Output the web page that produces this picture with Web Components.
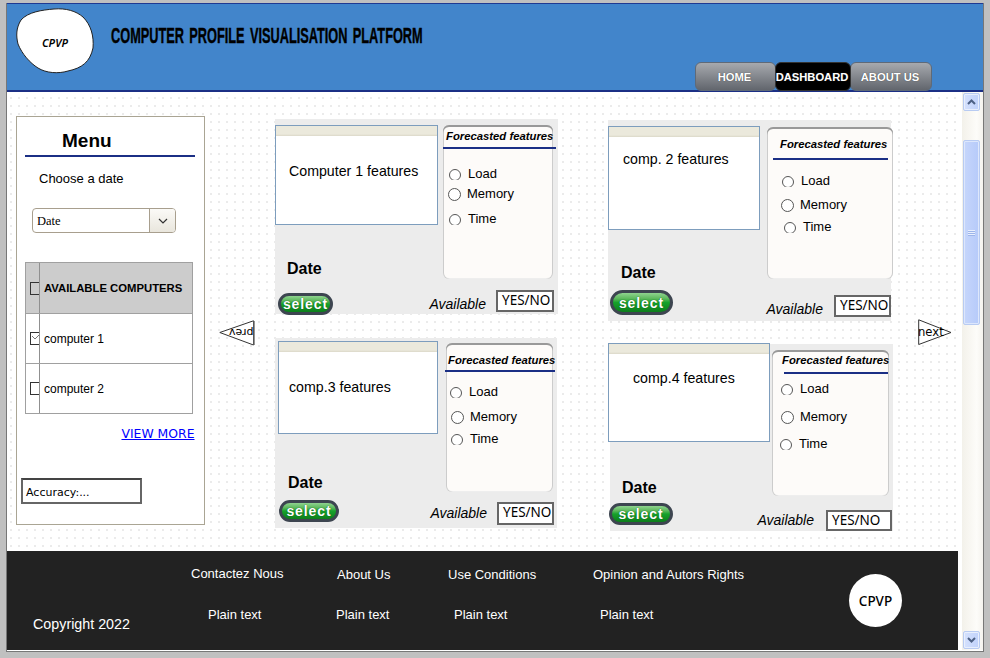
<!DOCTYPE html>
<html lang="en"><head><meta charset="utf-8"><title>CPVP</title>
<style>
html,body{margin:0;padding:0;background:#c0c0c0}
body{padding:3px 6px 0;font-family:"Liberation Sans",Arial,sans-serif;color:#000;height:655px;box-sizing:border-box;overflow:hidden}
</style></head><body>
<cp-frame>
  <cp-header slot="header">
    <cp-tab>HOME</cp-tab><cp-tab active style="--w:76px">DASHBOARD</cp-tab><cp-tab style="--w:82px">ABOUT US</cp-tab>
  </cp-header>
  <cp-sidebar slot="side">
    <cp-row header>AVAILABLE COMPUTERS</cp-row>
    <cp-row checked>computer 1</cp-row>
    <cp-row>computer 2</cp-row>
  </cp-sidebar>
  <cp-arrow slot="prev" dir="prev">prev</cp-arrow>

  <cp-card slot="c1" style="--cw:283px;--h:195px;--bx:0px;--by:6px;--bw:163px;--bh:100px;--tx:13px;--ty:27px;--fs:14.2px;--dx:12px;--dy:35px;--px:5px;--py:6px;--pw:110px;--ph:154px;--hx:3px;--hy:5px;--ux:0px;--uw:113px;--um:5px;--th:170px;--sx:3px;--sy:4px;--sw:55px;--sh:22px;--ay:7px;--ag:10px;--yy:1px;--yw:58px;--yh:22px;--pr:4px">
    <span slot="title">Computer 1 features</span>
    <cp-radio clip style="--x:6px;--t:17px;--g:7px">Load</cp-radio>
    <cp-radio style="--x:5px;--t:4px;--g:6px">Memory</cp-radio>
    <cp-radio clip style="--x:6px;--t:9px;--g:7px">Time</cp-radio>
  </cp-card>
  <cp-card slot="c3" style="--cw:282px;--h:190px;--bx:3px;--by:3px;--bw:160px;--bh:93px;--tx:10px;--ty:27px;--fs:14.2px;--dx:13px;--dy:40px;--px:8px;--py:5px;--pw:107px;--ph:149px;--hx:2px;--hy:11px;--ux:-1px;--uw:110px;--um:4px;--th:160px;--sx:4px;--sy:2px;--sw:60px;--sh:22px;--ay:7px;--ag:10px;--yy:4px;--yw:57px;--yh:23px;--pr:3px">
    <span slot="title">comp.3 features</span>
    <cp-radio clip style="--x:4px;--t:12px;--g:7px">Load</cp-radio>
    <cp-radio style="--x:5px;--t:9px;--g:6px">Memory</cp-radio>
    <cp-radio clip style="--x:5px;--t:6px;--g:7px">Time</cp-radio>
  </cp-card>
  <cp-card slot="c2" style="--cw:283px;--h:201px;--bx:0px;--by:6px;--bw:152px;--bh:104px;--tx:14px;--ty:14px;--fs:14.2px;--dx:13px;--dy:34px;--px:7px;--py:7px;--pw:126px;--ph:152px;--hx:13px;--hy:11px;--ux:6px;--uw:115px;--um:8px;--th:170px;--sx:2px;--sy:0px;--sw:63px;--sh:25px;--ay:11px;--ag:11px;--yy:5px;--yw:57px;--yh:22px;--pr:0px">
    <span slot="title">comp. 2 features</span>
    <cp-radio clip style="--x:15px;--t:13px;--g:7px">Load</cp-radio>
    <cp-radio style="--x:14px;--t:8px;--g:6px">Memory</cp-radio>
    <cp-radio clip style="--x:17px;--t:6px;--g:7px">Time</cp-radio>
  </cp-card>
  <cp-card slot="c4" style="--cw:283px;--h:187px;--ml:2px;--bx:-2px;--by:-1px;--bw:162px;--bh:99px;--tx:24px;--ty:16px;--fs:14.2px;--dx:12px;--dy:37px;--px:2px;--py:6px;--pw:117px;--ph:146px;--hx:10px;--hy:4px;--ux:12px;--uw:104px;--um:6px;--th:155px;--sx:-1px;--sy:4px;--sw:64px;--sh:22px;--ay:13px;--ag:12px;--yy:11px;--yw:66px;--yh:21px;--pr:1px">
    <span slot="title">comp.4 features</span>
    <cp-radio clip style="--x:9px;--t:7px;--g:7px">Load</cp-radio>
    <cp-radio style="--x:9px;--t:12px;--g:6px">Memory</cp-radio>
    <cp-radio clip style="--x:8px;--t:11px;--g:7px">Time</cp-radio>
  </cp-card>
  <cp-arrow slot="next" dir="next">next</cp-arrow>

  <cp-footer slot="footer">
    <cp-foot-col style="--w:146px;--a:0px;--b:17px"><span>Contactez Nous</span><span slot="b">Plain text</span></cp-foot-col>
    <cp-foot-col style="--w:111px;--a:0px;--b:-1px;--top:16px;--gap:24px"><span>About Us</span><span slot="b">Plain text</span></cp-foot-col>
    <cp-foot-col style="--w:145px;--a:0px;--b:6px;--top:16px;--gap:24px"><span>Use Conditions</span><span slot="b">Plain text</span></cp-foot-col>
    <cp-foot-col style="--w:256px;--a:0px;--b:7px;--top:16px;--gap:24px"><span>Opinion and Autors Rights</span><span slot="b">Plain text</span></cp-foot-col>
  </cp-footer>
  <cp-scrollbar slot="scroll"></cp-scrollbar>
</cp-frame>
<script>
function def(name, html, init){
  customElements.define(name, class extends HTMLElement{
    constructor(){super();const s=this.attachShadow({mode:"open"});s.innerHTML=html;}
    connectedCallback(){ if(init) init(this); }
  });
}
def("cp-frame",`<style>
:host{display:block;width:978px;border:1px solid #777;border-top:0;box-sizing:border-box;background:#fff;height:649px}
.main{display:flex}
.left{width:951px;display:flex;flex-direction:column}
.content{height:459px;display:flex;align-items:flex-start;background-color:#fff;
 background-image:radial-gradient(circle at 1px 1px,#ebebeb .8px,transparent 1px);background-size:8px 8px;background-position:3px 5px}
.col{display:flex;flex-direction:column;width:285px}
.c1{margin:27px 0 0 20px;width:283px;gap:24px}
.c2{margin:28px 0 0 50px;gap:23px}
.pv{display:block;margin:228px 0 0 14px}
.nx{display:block;margin:227px 0 0 25px}
.gut{width:4px}
</style>
<slot name="header"></slot>
<div class="main"><div class="left">
<div class="content">
<slot name="side"></slot>
<div class="pv"><slot name="prev"></slot></div>
<div class="col c1"><slot name="c1"></slot><slot name="c3"></slot></div>
<div class="col c2"><slot name="c2"></slot><slot name="c4"></slot></div>
<div class="nx"><slot name="next"></slot></div>
</div>
<slot name="footer"></slot>
</div><div class="gut"></div><slot name="scroll"></slot></div>`);

def("cp-header",`<style>
:host{display:flex;height:89px;box-sizing:border-box;background:#4285cb;border-top:1px solid #1f3a93;border-bottom:2px solid #1b2f85;font-family:"Liberation Sans",Arial,sans-serif}
.logo{display:grid;width:80px;height:68px;margin:4px 0 0 9px;place-items:center}
.logo>*{grid-area:1/1}
.logo span{font:italic 600 11px "Noto Sans",sans-serif;margin-top:1px;margin-left:-2px}
.title{margin:20px 0 0 15px;width:312px;height:24px;line-height:24px;font-size:22px;font-weight:700;white-space:nowrap;transform:scaleX(.58);transform-origin:0 50%;word-spacing:3px;-webkit-text-stroke:.4px #000;color:#000}
nav{display:flex;margin-left:auto;margin-right:52px;align-self:flex-end;margin-bottom:-1px}
</style>
<div class="logo"><svg width="80" height="68" viewBox="0 0 80 68"><path d="M38 1C50 0 60 3 67 9C75 17 78 28 77 40C74 54 66 60 52 63C42 66 30 65 22 60C14 55 6 46 2 36C0 28 0 20 5 12C12 4 26 2 38 1Z" fill="#fff" stroke="#222" stroke-width="1"/></svg><span>CPVP</span></div>
<div class="title">COMPUTER PROFILE VISUALISATION PLATFORM</div>
<nav><slot></slot></nav>`);

def("cp-tab",`<style>
:host{display:flex;align-items:center;justify-content:center;box-sizing:border-box;width:var(--w,81px);height:29px;margin-right:-1px;padding-right:2px;border:1px solid #5f6a78;border-radius:6px;
 background:linear-gradient(#a6a9ae,#62666d);color:#fff;font:700 11.2px "Liberation Sans",Arial,sans-serif;text-shadow:0 0 1px #333;white-space:nowrap}
:host([active]){background:#000;border-color:#333;position:relative;z-index:1}
</style><slot></slot>`);

def("cp-sidebar",`<style>
:host{display:block;box-sizing:border-box;width:189px;height:409px;margin:24px 0 0 9px;border:1px solid #aaa594;background:#fff;flex:none;font-family:"Liberation Sans",Arial,sans-serif}
h2{margin:13px 0 0 45px;font-size:19px;line-height:22px;font-weight:700}
.rule{height:2px;width:170px;margin:3px 0 0 8px;background:#1b2f85}
.choose{margin:14px 0 0 22px;font-size:13px;line-height:16px}
.sel{display:flex;box-sizing:border-box;width:144px;height:25px;margin:21px 0 0 15px;border:1px solid #a89f8e;border-radius:4px;background:#fff;font:12.5px/24px "Liberation Serif",serif}
.sel span{flex:1;padding-left:4px}
.sel i{display:flex;align-items:center;justify-content:center;width:25px;border-left:1px solid #a89f8e;background:linear-gradient(#fbfaf7,#e9e6dd);border-radius:0 3px 3px 0}
.table{width:168px;margin:29px 0 0 8px;box-sizing:border-box;border:1px solid #a0a0a0;border-bottom:0}
.more{margin:12px 9.5px 0 0;text-align:right;font:12.4px/16px "DejaVu Sans",sans-serif;color:#00f;text-decoration:underline}
.acc{box-sizing:border-box;width:121px;height:26px;margin:36px 0 0 4px;border:2px solid #666;border-top-color:#444;font:11px/25px "DejaVu Sans",sans-serif;padding-left:3px;overflow:hidden}
</style>
<h2>Menu</h2><div class="rule"></div>
<div class="choose">Choose a date</div>
<div class="sel"><span>Date</span><i><svg width="10" height="6" viewBox="0 0 10 6"><path d="M1 1l4 4 4-4" fill="none" stroke="#333" stroke-width="1.2"/></svg></i></div>
<div class="table"><slot></slot></div>
<div class="more">VIEW MORE</div>
<div class="acc">Accuracy:...</div>`);

def("cp-row",`<style>
:host{display:grid;box-sizing:border-box;grid-template-columns:14px 1fr;height:50px;border-bottom:1px solid #a0a0a0;font:12px "Liberation Sans",Arial,sans-serif}
:host([header]){height:51px;background:#ccc;font-weight:700;font-size:11.3px}
.c{border-right:1px solid #909090;display:flex;align-items:center;padding-left:4px}
.b{box-sizing:border-box;width:10px;height:13px;border:1.4px solid #333;border-right:0;display:block;overflow:hidden}
.t{display:flex;align-items:center;padding-left:4px;white-space:nowrap}
svg{display:none}
:host([checked]) svg{display:block}
</style>
<div class="c"><span class="b"><svg width="9" height="10" viewBox="0 0 9 10"><path d="M1 3l3 3 4-4" fill="none" stroke="#777" stroke-width="1"/></svg></span></div>
<div class="t"><slot></slot></div>`);

def("cp-arrow",`<style>
:host{display:grid;font:11px "DejaVu Sans",sans-serif;color:#000}
svg{grid-area:1/1;display:block}
.t{grid-area:1/1;align-self:center;white-space:nowrap;line-height:14px}
.prev{transform:rotate(180deg);justify-self:end;margin-right:1px;margin-top:-2px}
.next{font-size:11.6px;margin-top:-1px;margin-left:0}
</style><span id="s" style="display:contents"></span>`,el=>{
  const s=el.shadowRoot.getElementById("s");
  if(s.dataset.d)return;s.dataset.d=1;
  s.innerHTML=el.getAttribute("dir")==="prev"?`<svg width="36" height="26" viewBox="0 0 36 26"><path d="M.8 12.5L34.5 .8V25Z" fill="#fff" stroke="#333" stroke-width="1"/><path d="M35 1V25" stroke="#666" stroke-width="1.4"/></svg><span class="t prev"><slot></slot></span>`
   :`<svg width="34" height="27" viewBox="0 0 34 27"><path d="M.7 .8L33 13.5.7 25.5Z" fill="#fff" stroke="#333" stroke-width="1"/></svg><span class="t next"><slot></slot></span>`;
});

def("cp-card",`<style>
:host{display:block;width:var(--cw);height:var(--h);margin-left:var(--ml,0);background:#ececec;font-family:"Liberation Sans",Arial,sans-serif}
.top{display:flex;height:var(--th);align-items:flex-start}
.left{flex:none}
.box{box-sizing:border-box;margin:var(--by) 0 0 var(--bx);width:var(--bw);height:var(--bh);background:#fff;border:1px solid #7d9dbd}
.strip{height:10px;background:linear-gradient(#ebe9dc 80%,#dbd8c8)}
.txt{padding:var(--ty) 0 0 var(--tx);font-size:var(--fs);line-height:16px;white-space:nowrap}
.date{margin:var(--dy) 0 0 var(--dx);font-size:16px;line-height:18px;font-weight:700}
.panel{flex:none;margin:var(--py) 0 0 var(--px);width:var(--pw);height:var(--ph);box-sizing:border-box;border-radius:6px;background:#fdfbf9;box-shadow:inset 0 2px 0 #999,inset 1px 0 0 #ccc,inset -1px 0 0 #ccc,inset 0 -1px 0 #eee}
.head{margin:0;padding:var(--hy) 0 0 var(--hx);font:italic 700 11.3px/12px "Liberation Sans",Arial,sans-serif;white-space:nowrap}
.u{height:2px;width:var(--uw);margin:var(--um) 0 0 var(--ux);background:#1b2f85}
.bot{display:flex;align-items:flex-start;padding-right:var(--pr)}
.sbtn{box-sizing:border-box;display:flex;align-items:center;justify-content:center;margin:var(--sy) 0 0 var(--sx);width:var(--sw);height:var(--sh);border-radius:13px;border:3px solid #3d4550;background:linear-gradient(#8fd38f 0,#5cb85c 30%,#17a22b 50%,#0d7e1c 100%);color:#fff;font:700 14px/16px "Liberation Sans",Arial,sans-serif;letter-spacing:.9px;text-shadow:0 0 1px #040;overflow:hidden}
.av{margin:var(--ay) var(--ag) 0 auto;font:italic 14px/16px "Liberation Sans",Arial,sans-serif}
.yn{box-sizing:border-box;margin-top:var(--yy);width:var(--yw);height:var(--yh);border:2px solid #666;background:#fff;font:13.5px/17px "Noto Sans",sans-serif;padding-left:4px;white-space:nowrap;overflow:hidden}
</style>
<div class="top"><div class="left"><div class="box"><div class="strip"></div><div class="txt"><slot name="title"></slot></div></div><div class="date">Date</div></div>
<div class="panel"><div class="head">Forecasted features</div><div class="u"></div><slot></slot></div></div>
<div class="bot"><div class="sbtn">select</div><div class="av">Available</div><div class="yn">YES/NO</div></div>`);

def("cp-radio",`<style>
:host{display:flex;align-items:center;height:16px;margin:var(--t) 0 0 var(--x);font:13px/16px "Liberation Sans",Arial,sans-serif}
.r{display:block;box-sizing:border-box;width:13px;height:13px;border-radius:50%;border:1.3px solid #555;background:#fff}
.w{display:block;width:13px;height:13px;overflow:hidden;margin-right:var(--g)}
:host([clip]) .w{width:12px;height:11px;margin-top:1px}
:host([clip]) .r{width:12px;height:12px}
</style><span class="w"><span class="r"></span></span><slot></slot>`);

def("cp-footer",`<style>
:host{display:flex;height:99px;margin-bottom:1px;background:#222;color:#fff;font:13px/16px "Liberation Sans",Arial,sans-serif;flex:none}
.copy{box-sizing:border-box;width:184px;padding:65px 0 0 26px;font-size:14.3px;white-space:nowrap}
.logo{flex:none;display:flex;align-items:center;justify-content:center;width:53px;height:53px;margin-top:23px;border-radius:50%;background:#fff;color:#000;font:500 13.5px "Noto Sans",sans-serif}
</style><div class="copy">Copyright 2022</div><slot></slot><div class="logo">CPVP</div>`);

def("cp-foot-col",`<style>
:host{display:block;flex:none;width:var(--w);white-space:nowrap;font-size:13px}
.a{display:block;margin-top:var(--top,15px);padding-left:var(--a);height:16px}
.b{display:block;margin-top:var(--gap,25px);margin-left:var(--b)}
</style><span class="a"><slot></slot></span><span class="b"><slot name="b"></slot></span>`);

def("cp-scrollbar",`<style>
:host{display:flex;flex-direction:column;width:21px;height:558px;box-sizing:border-box;padding:1px 3px 1px 1px;background:linear-gradient(90deg,#f3f1ea,#fdfcf9 70%,#f5f3ee);align-items:center;flex:none}
.b{box-sizing:border-box;width:17px;height:18px;border:1px solid #b8cbf2;border-radius:2px;background:linear-gradient(90deg,#d5e1fd,#c0d2fb);display:flex;align-items:center;justify-content:center;box-shadow:inset 0 0 0 1px #e8effd}
.t{box-sizing:border-box;width:17px;height:185px;margin-top:29px;border:1px solid #b8cbf2;border-radius:2px;background:linear-gradient(90deg,#c6d6fb,#b6cafa);box-shadow:inset 0 0 0 1px #dde7fc;display:flex;align-items:center;justify-content:center}
.g{width:7px;height:6px;background:repeating-linear-gradient(#e9effd 0 1px,#9db5ea 1px 2px)}
.s{flex:1}
</style>
<div class="b"><svg width="9" height="6" viewBox="0 0 9 6"><path d="M1 5l3.5-3.5L8 5" fill="none" stroke="#4d6185" stroke-width="2"/></svg></div>
<div class="t"><div class="g"></div></div><div class="s"></div>
<div class="b"><svg width="9" height="6" viewBox="0 0 9 6"><path d="M1 1l3.5 3.5L8 1" fill="none" stroke="#4d6185" stroke-width="2"/></svg></div>`);
</script>
</body></html>
